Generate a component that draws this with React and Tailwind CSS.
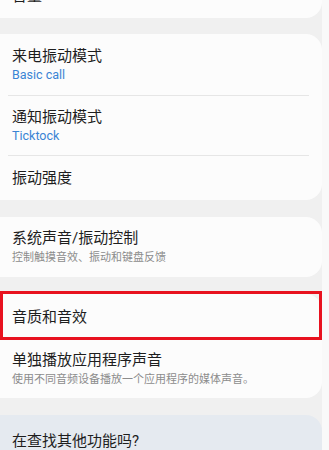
import React from 'react';

const font = { fontFamily: "Roboto, 'Noto Sans CJK SC', sans-serif" };

const Item = ({ title, sub, subColor = "gray", height = "h-[45px]" }) => (
    <div className={`flex flex-col justify-center pl-3 pr-4 ${height}`}>
        <p className="text-[15px] leading-[20px] text-[#1e1e1e]">{title}</p>
        {sub && (
            <p
                className={
                    subColor === "blue"
                        ? "mt-[1px] text-[12.5px] leading-[16px] text-[#3a84d4]"
                        : "mt-[2px] text-[11px] leading-[16px] text-[#8c8c8c]"
                }
            >
                {sub}
            </p>
        )}
    </div>
);

const Divider = () => <div className="ml-2 mr-[13px] h-px bg-[#e6e6e6]"></div>;

const Card = ({ children, className = "" }) => (
    <div className={`rounded-r-[16px] bg-[#fcfcfc] ${className}`}>{children}</div>
);

export default function App() {
    return (
        <div className="flex h-[450px] w-[329px] overflow-hidden bg-[#f9f9f9]" style={font}>
            <div className="relative flex w-[322px] flex-col gap-[17px] bg-[#f0f0f0]">
                <Card className="-mt-[27px] shrink-0">
                    <Item title="音量" />
                </Card>

                <Card className="-mt-[1px] shrink-0">
                    <Item title="来电振动模式" sub="Basic call" subColor="blue" height="h-[61px]" />
                    <Divider />
                    <Item title="通知振动模式" sub="Ticktock" subColor="blue" height="h-[59px]" />
                    <Divider />
                    <Item title="振动强度" height="h-[44px]" />
                </Card>

                <Card className="shrink-0">
                    <Item title="系统声音/振动控制" sub="控制触摸音效、振动和键盘反馈" height="h-[60px]" />
                </Card>

                <Card className="relative shrink-0">
                    <Item title="音质和音效" height="h-[46px]" />
                    <Item title="单独播放应用程序声音" sub="使用不同音频设备播放一个应用程序的媒体声音。" height="h-[58px]" />
                    <div className="pointer-events-none absolute -top-[3px] left-0 h-[49px] w-[322px] border-[3px] border-[#e8121f]"></div>
                </Card>

                <div className="shrink-0 rounded-r-[16px] bg-[#e5eaf0] pl-3 pt-4 pb-6">
                    <p className="text-[15px] leading-[20px] text-[#1e1e1e]">在查找其他功能吗?</p>
                </div>
            </div>
        </div>
    );
}
